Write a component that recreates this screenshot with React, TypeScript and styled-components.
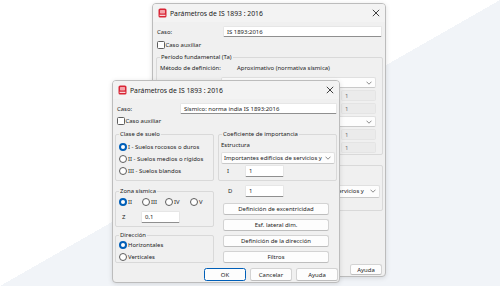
import styled, { createGlobalStyle } from "styled-components";

const GlobalStyle = createGlobalStyle`
  html, body {
    margin: 0;
    padding: 0;
  }
  body {
    width: 500px;
    height: 286px;
    overflow: hidden;
    font-family: "Noto Sans", "Open Sans", sans-serif;
    font-size: 5.95px;
    color: #1c1c1c;
  }
  * {
    box-sizing: border-box;
  }
`;

const Desktop = styled.div`
  position: relative;
  width: 500px;
  height: 286px;
  overflow: hidden;
  background: linear-gradient(to top left, #f1f4f8 50%, #ffffff 50%);
`;

const Window = styled.div<{ $x: number; $y: number; $w: number; $h: number }>`
  position: absolute;
  left: ${({ $x }) => $x}px;
  top: ${({ $y }) => $y}px;
  width: ${({ $w }) => $w}px;
  height: ${({ $h }) => $h}px;
  display: flex;
  flex-direction: column;
  background: #f0f0f0;
  border: 1px solid #bcbcbc;
  border-radius: 4px;
  box-shadow: 0 1px 5px rgba(0, 0, 0, 0.12);
  overflow: hidden;
`;

const TitleBar = styled.div`
  flex: none;
  height: 18px;
  display: flex;
  align-items: center;
  gap: 3px;
  padding: 0 5px 0 5px;
  background: #f3f3f3;
  font-size: 6.8px;
  color: #1a1a1a;
`;

const TitleText = styled.span`
  flex: 1;
`;

const Body = styled.div<{ $pl: number }>`
  flex: 1;
  display: flex;
  flex-direction: column;
  padding-left: ${({ $pl }) => $pl}px;
`;

const Row = styled.div<{ $mt?: number; $h: number }>`
  display: flex;
  align-items: center;
  flex: none;
  margin-top: ${({ $mt = 0 }) => $mt}px;
  height: ${({ $h }) => $h}px;
  white-space: nowrap;
`;

const Label = styled.span<{ $w?: number; $pl?: number }>`
  flex: none;
  width: ${({ $w }) => ($w ? `${$w}px` : "auto")};
  padding-left: ${({ $pl = 0 }) => $pl}px;
`;

const Spacer = styled.span`
  flex: 1;
`;

const Field = styled.div<{ $w: number; $h?: number; $disabled?: boolean }>`
  flex: none;
  width: ${({ $w }) => $w}px;
  height: ${({ $h = 11 }) => $h}px;
  display: flex;
  align-items: center;
  padding: 0 3px;
  background: ${({ $disabled }) => ($disabled ? "#ebebeb" : "#ffffff")};
  border: 1px solid ${({ $disabled }) => ($disabled ? "#e4e4e4" : "#e6e6e6")};
  border-bottom-color: ${({ $disabled }) => ($disabled ? "#e4e4e4" : "#8f8f8f")};
  border-radius: 1.5px;
  color: ${({ $disabled }) => ($disabled ? "#6e6e6e" : "#1c1c1c")};
  overflow: hidden;
  white-space: nowrap;
`;

const SelectBox = styled.div<{ $w: number; $h?: number }>`
  flex: none;
  width: ${({ $w }) => $w}px;
  height: ${({ $h = 11 }) => $h}px;
  display: flex;
  align-items: center;
  gap: 2px;
  padding: 0 3px 0 2px;
  background: #fdfdfd;
  border: 1px solid #e0e0e0;
  border-bottom-color: #c9c9c9;
  border-radius: 2px;
  white-space: nowrap;
`;

const SelectText = styled.span`
  flex: 1;
  min-width: 0;
  overflow: hidden;
`;

const CheckBox = styled.span`
  flex: none;
  width: 7.5px;
  height: 7.5px;
  margin-right: 1px;
  background: #ffffff;
  border: 1px solid #5e5e5e;
  border-radius: 1.5px;
`;

const Radio = styled.span<{ $checked?: boolean }>`
  flex: none;
  width: 8px;
  height: 8px;
  margin-right: 1px;
  border-radius: 50%;
  background: #ffffff;
  border: ${({ $checked }) => ($checked ? "2.4px solid #005fb8" : "1px solid #5c5c5c")};
`;

const RadioOption = styled.span<{ $w?: number }>`
  display: flex;
  align-items: center;
  flex: none;
  width: ${({ $w }) => ($w ? `${$w}px` : "auto")};
`;

const Group = styled.div<{ $mt: number; $h: number; $pt?: number; $pl?: number; $pr?: number; $w?: number }>`
  position: relative;
  flex: none;
  display: flex;
  flex-direction: column;
  width: ${({ $w }) => ($w ? `${$w}px` : "auto")};
  margin-top: ${({ $mt }) => $mt}px;
  height: ${({ $h }) => $h}px;
  padding: ${({ $pt = 0 }) => $pt}px ${({ $pr = 0 }) => $pr}px 0 ${({ $pl = 0 }) => $pl}px;
  border: 1px solid #d9d9d9;
  border-radius: 2px;
`;

const Legend = styled.span`
  position: absolute;
  top: -5px;
  left: 3px;
  padding: 0 1px;
  line-height: 9px;
  background: #f0f0f0;
  white-space: nowrap;
`;

const Columns = styled.div`
  display: flex;
  gap: 4px;
  margin-top: 9px;
`;

const Column = styled.div<{ $w: number }>`
  display: flex;
  flex-direction: column;
  width: ${({ $w }) => $w}px;
`;

const Button = styled.div<{ $w: number; $h: number; $default?: boolean; $mt?: number; $ml?: number }>`
  flex: none;
  width: ${({ $w }) => $w}px;
  height: ${({ $h }) => $h}px;
  margin-top: ${({ $mt = 0 }) => $mt}px;
  margin-left: ${({ $ml = 0 }) => $ml}px;
  display: flex;
  align-items: center;
  justify-content: center;
  background: #fdfdfd;
  border: ${({ $default }) => ($default ? "1.5px solid #005fb8" : "1px solid #d3d3d3")};
  border-bottom-color: ${({ $default }) => ($default ? "#005fb8" : "#bdbdbd")};
  border-radius: 2.5px;
  white-space: nowrap;
`;

const ButtonBar = styled.div<{ $pr: number; $pb: number }>`
  margin-top: auto;
  display: flex;
  justify-content: flex-end;
  gap: 4px;
  padding-right: ${({ $pr }) => $pr}px;
  padding-bottom: ${({ $pb }) => $pb}px;
`;

const AppIcon = () => (
  <svg width="9" height="10" viewBox="0 0 9 10">
    <rect x="0.5" y="0.5" width="8" height="9" rx="1.6" fill="#d92636" />
    <rect x="2" y="2" width="5" height="3.4" rx="0.6" fill="#f4a3aa" />
    <rect x="1.6" y="6.8" width="5.8" height="1" fill="#ffffff" />
  </svg>
);

const CloseIcon = () => (
  <svg width="8" height="8" viewBox="0 0 8 8">
    <path d="M0.8 0.8 L7.2 7.2 M7.2 0.8 L0.8 7.2" stroke="#2b2b2b" strokeWidth="0.9" />
  </svg>
);

const Chevron = () => (
  <svg width="6" height="4" viewBox="0 0 6 4">
    <path d="M0.5 0.7 L3 3.2 L5.5 0.7" fill="none" stroke="#5a5a5a" strokeWidth="0.7" />
  </svg>
);

function BackDialog() {
  // most of this window sits under the front dialog: only the right-hand
  // fields and the help button show through
  return (
    <Window $x={152} $y={3} $w={234} $h={274}>
      <TitleBar>
        <AppIcon />
        <TitleText>Parámetros de IS 1893 : 2016</TitleText>
        <CloseIcon />
      </TitleBar>
      <Body $pl={3}>
        <Row $mt={4} $h={11}>
          <Label $w={67} $pl={1}>Caso:</Label>
          <Field $w={159}>IS 1893:2016</Field>
        </Row>
        <Row $mt={4} $h={8}>
          <Label $pl={1} />
          <CheckBox />
          Caso auxiliar
        </Row>
        <Group $mt={8} $h={98} $pt={5} $pl={3} $pr={6} $w={227}>
          <Legend>Período fundamental (Ta)</Legend>
          <Row $h={10}>
            <Label $w={77}>Método de definición:</Label>
            Aproximativo (normativa sísmica)
          </Row>
          <Row $mt={4} $h={11}>
            <Spacer />
            <SelectBox $w={155}>
              <SelectText />
              <Chevron />
            </SelectBox>
          </Row>
          <Row $mt={2} $h={11}>
            <Spacer />
            <Field $w={35} $disabled>1</Field>
          </Row>
          <Row $mt={2} $h={11}>
            <Spacer />
            <Field $w={35} $disabled>1</Field>
          </Row>
          <Row $mt={2} $h={11}>
            <Spacer />
            <SelectBox $w={155}>
              <SelectText />
              <Chevron />
            </SelectBox>
          </Row>
          <Row $mt={2} $h={11}>
            <Spacer />
            <Field $w={35} $disabled>1</Field>
          </Row>
          <Row $mt={2} $h={11}>
            <Spacer />
            <Field $w={35} $disabled>1</Field>
          </Row>
        </Group>
        <Group $mt={10} $h={46} $pt={17} $pl={3} $pr={2} $w={227}>
          <Row $mt={2} $h={12}>
            <Spacer />
            <SelectBox $w={117} $h={13}>
              <SelectText>Importantes edificios de servicios y</SelectText>
              <Chevron />
            </SelectBox>
          </Row>
        </Group>
        <ButtonBar $pr={3} $pb={1}>
          <Button $w={32} $h={11}>Ayuda</Button>
        </ButtonBar>
      </Body>
    </Window>
  );
}

function FrontDialog() {
  return (
    <Window $x={112} $y={80} $w={228} $h={203}>
      <TitleBar>
        <AppIcon />
        <TitleText>Parámetros de IS 1893 : 2016</TitleText>
        <CloseIcon />
      </TitleBar>
      <Body $pl={2}>
        <Row $mt={4} $h={11}>
          <Label $w={65} $pl={2}>Caso:</Label>
          <Field $w={157}>Sísmico: norma india IS 1893:2016</Field>
        </Row>
        <Row $mt={3} $h={8}>
          <Label $pl={2} />
          <CheckBox />
          Caso auxiliar
        </Row>
        <Columns>
          <Column $w={99}>
            <Group $mt={0} $h={47} $pt={6} $pl={3}>
              <Legend>Clase de suelo</Legend>
              <Row $h={12}>
                <Radio $checked />I - Suelos rocosos o duros
              </Row>
              <Row $h={12}>
                <Radio />II - Suelos medios o rígidos
              </Row>
              <Row $h={12}>
                <Radio />III - Suelos blandos
              </Row>
            </Group>
            <Group $mt={10} $h={36} $pt={5} $pl={3}>
              <Legend>Zona sísmica</Legend>
              <Row $h={10}>
                <RadioOption $w={23}>
                  <Radio $checked />II
                </RadioOption>
                <RadioOption $w={23}>
                  <Radio />III
                </RadioOption>
                <RadioOption $w={25}>
                  <Radio />IV
                </RadioOption>
                <RadioOption>
                  <Radio />V
                </RadioOption>
              </Row>
              <Row $mt={4} $h={12}>
                <Label $w={22} $pl={3}>Z</Label>
                <Field $w={39} $h={12}>0,1</Field>
              </Row>
            </Group>
            <Group $mt={8} $h={28} $pt={3} $pl={3}>
              <Legend>Dirección</Legend>
              <Row $h={12}>
                <Radio $checked />Horizontales
              </Row>
              <Row $h={12}>
                <Radio />Verticales
              </Row>
            </Group>
          </Column>
          <Column $w={119}>
            <Group $mt={0} $h={47} $pt={5} $pl={2}>
              <Legend>Coeficiente de importancia</Legend>
              <Row $h={10}>Estructura</Row>
              <Row $mt={2} $h={12}>
                <SelectBox $w={114} $h={12}>
                  <SelectText>Importantes edificios de servicios y</SelectText>
                  <Chevron />
                </SelectBox>
              </Row>
              <Row $mt={1} $h={12}>
                <Label $w={24} $pl={6}>I</Label>
                <Field $w={39} $h={12}>1</Field>
              </Row>
            </Group>
            <Row $mt={4} $h={12}>
              <Label $w={27} $pl={10}>D</Label>
              <Field $w={39} $h={12}>1</Field>
            </Row>
            <Button $w={106} $h={12} $mt={6} $ml={5}>Definición de excentricidad</Button>
            <Button $w={106} $h={12} $mt={4} $ml={5}>Esf. lateral dim.</Button>
            <Button $w={106} $h={12} $mt={4} $ml={5}>Definición de la dirección</Button>
            <Button $w={106} $h={12} $mt={4} $ml={5}>Filtros</Button>
          </Column>
        </Columns>
        <ButtonBar $pr={1} $pb={1}>
          <Button $w={42} $h={13} $default>OK</Button>
          <Button $w={42} $h={13}>Cancelar</Button>
          <Button $w={42} $h={13}>Ayuda</Button>
        </ButtonBar>
      </Body>
    </Window>
  );
}

export default function App() {
  return (
    <>
      <GlobalStyle />
      <Desktop>
        <BackDialog />
        <FrontDialog />
      </Desktop>
    </>
  );
}
